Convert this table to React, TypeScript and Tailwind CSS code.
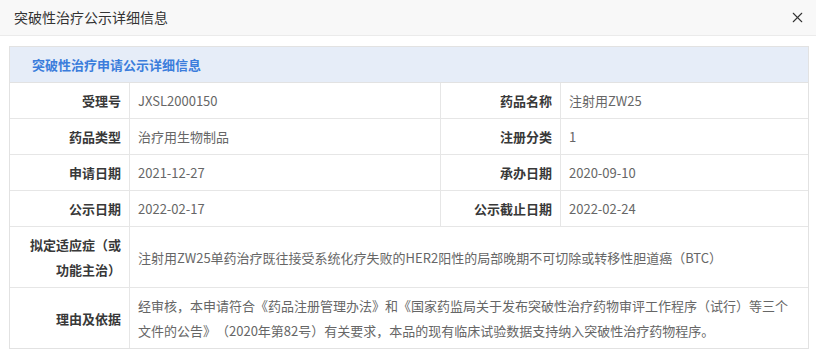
import { Fragment } from "react";
import { X } from "lucide-react";

const font = "font-['Noto_Sans_CJK_SC','Noto_Sans',sans-serif]";

const rows: { label: string; value: string }[][] = [
  [
    { label: "受理号", value: "JXSL2000150" },
    { label: "药品名称", value: "注射用ZW25" },
  ],
  [
    { label: "药品类型", value: "治疗用生物制品" },
    { label: "注册分类", value: "1" },
  ],
  [
    { label: "申请日期", value: "2021-12-27" },
    { label: "承办日期", value: "2020-09-10" },
  ],
  [
    { label: "公示日期", value: "2022-02-17" },
    { label: "公示截止日期", value: "2022-02-24" },
  ],
];

const wide = [
  {
    label: "拟定适应症（或功能主治）",
    value:
      "注射用ZW25单药治疗既往接受系统化疗失败的HER2阳性的局部晚期不可切除或转移性胆道癌（BTC）",
  },
  {
    label: "理由及依据",
    value:
      "经审核，本申请符合《药品注册管理办法》和《国家药监局关于发布突破性治疗药物审评工作程序（试行）等三个文件的公告》（2020年第82号）有关要求，本品的现有临床试验数据支持纳入突破性治疗药物程序。",
  },
];

function Label({ children, last }: { children: string; last?: boolean }) {
  return (
    <div
      className={`flex items-center justify-end border-r border-[#e6e6e6] px-2 py-[5px] text-right font-bold leading-[25px] text-[#383838] ${
        last ? "" : "border-b"
      }`}
    >
      {children}
    </div>
  );
}

function Value({
  children,
  wideCell,
  end,
  last,
}: {
  children: string;
  wideCell?: boolean;
  end?: boolean;
  last?: boolean;
}) {
  return (
    <div
      className={`flex items-center border-[#e6e6e6] px-2 py-[5px] leading-[25px] text-[#666] ${
        wideCell ? "col-span-3" : ""
      } ${end ? "" : "border-r"} ${last ? "" : "border-b"}`}
    >
      {children}
    </div>
  );
}

export default function App() {
  return (
    <div className={`h-[353px] w-[816px] overflow-hidden bg-white ${font} [text-spacing-trim:space-all]`}>
      <div className="flex h-[36px] items-center justify-between border-b border-[#ebebeb] bg-[#f8f8f8] pl-[14px] pr-[10px]">
        <span className="text-[14px] text-[#333]">突破性治疗公示详细信息</span>
        <X className="h-[17px] w-[17px] text-[#333]" strokeWidth={1.5} />
      </div>

      <div className="ml-[9px] mt-[10px] w-[800px] border border-[#e2e2e2] text-[13px]">
        <div className="flex h-[36px] items-center border-b border-[#e2e2e2] bg-[#e6edf8] pl-[22px] font-bold text-[#3b7ddc]">
          突破性治疗申请公示详细信息
        </div>
        <div className="grid grid-cols-[120px_311px_120px_1fr]">
          {rows.map((pair) => (
            <Fragment key={pair[0].label}>
              <Label>{pair[0].label}</Label>
              <Value>{pair[0].value}</Value>
              <Label>{pair[1].label}</Label>
              <Value end>{pair[1].value}</Value>
            </Fragment>
          ))}
          {wide.map((row, i) => (
            <Fragment key={row.label}>
              <Label last={i === wide.length - 1}>{row.label}</Label>
              <Value wideCell end last={i === wide.length - 1}>
                {row.value}
              </Value>
            </Fragment>
          ))}
        </div>
      </div>
    </div>
  );
}
